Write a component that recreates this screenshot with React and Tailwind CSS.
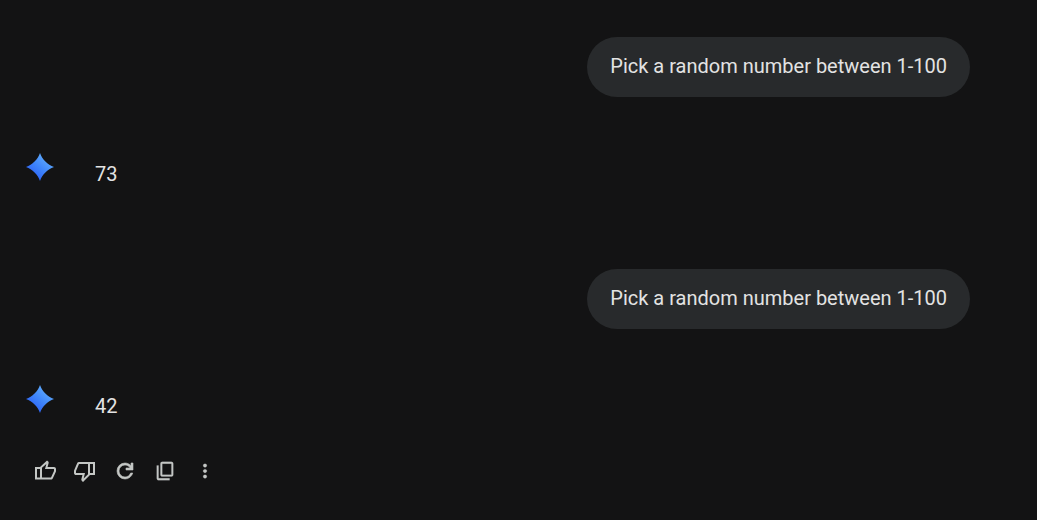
import React from "react";

const turns = [
  { id: 1, prompt: "Pick a random number between 1-100", reply: "73" },
  { id: 2, prompt: "Pick a random number between 1-100", reply: "42" },
];

const actions = [
  {
    label: "Good response",
    size: "size-6",
    stroke: 0,
    d: "M720-140H280v-500l280-260 50 40q7 7 11.5 19t4.500 23v14l-44 164h258q32 0 56 24t24 56v80q0 7-2 15t-4 15L794-188q-9 20-30 34t-44 14Zm-360-80h360l120-260v-80H480l54-200-174 154v386Zm-80-420v80H160v340h120v80H80v-500h200Z",
  },
  {
    label: "Bad response",
    size: "size-6",
    stroke: 0,
    d: "M240-840h440v520L400-40l-50-50q-7-7-11.5-19t-4.5-23v-14l44-174H120q-32 0-56-24t-24-56v-80q0-7 2-15t4-15l120-282q9-20 30-34t44-14Zm360 80H240L120-480v80h360l-54 220 174-174v-406Zm80 440v-80h120v-360H680v-80h200v520H680Z",
  },
  {
    label: "Redo",
    size: "size-6",
    stroke: 24,
    d: "M480-160q-134 0-227-93t-93-227q0-134 93-227t227-93q69 0 132 28.500T720-690v-110h80v280H520v-80h168q-32-56-87.500-88T480-720q-100 0-170 70t-70 170q0 100 70 170t170 70q77 0 139-44t87-116h84q-28 106-114 173t-196 67Z",
  },
  {
    label: "Copy",
    size: "size-[22px]",
    stroke: 8,
    d: "M360-240q-33 0-56.500-23.500T280-320v-480q0-33 23.500-56.500T360-880h400q33 0 56.500 23.500T840-800v480q0 33-23.500 56.500T760-240H360Zm0-80h400v-480H360v480ZM200-80q-33 0-56.500-23.500T120-160v-560h80v560h480v80H200Z",
  },
  {
    label: "More options",
    size: "size-[22px]",
    stroke: 8,
    d: "M480-160q-33 0-56.500-23.500T400-240q0-33 23.500-56.500T480-320q33 0 56.500 23.500T560-240q0 33-23.500 56.500T480-160Zm0-240q-33 0-56.500-23.500T400-480q0-33 23.500-56.500T480-560q33 0 56.500 23.500T560-480q0 33-23.500 56.500T480-400Zm0-240q-33 0-56.500-23.500T400-720q0-33 23.500-56.500T480-800q33 0 56.500 23.500T560-720q0 33-23.500 56.500T480-640Z",
  },
];

function Spark({ id }) {
  const gradient = `spark-${id}`;
  return (
    <svg viewBox="0 0 28 28" className="size-7 shrink-0" aria-hidden="true">
      <defs>
        <linearGradient id={gradient} x1="6" y1="22" x2="20" y2="5" gradientUnits="userSpaceOnUse">
          <stop offset="0" stopColor="#2f66f6" />
          <stop offset="0.5" stopColor="#3f86fb" />
          <stop offset="1" stopColor="#5ba6fb" />
        </linearGradient>
      </defs>
      <path
        d="M14 0C16.400 6.600 21.400 11.600 28 14C21.400 16.400 16.400 21.400 14 28C11.600 21.400 6.600 16.400 0 14C6.600 11.600 11.600 6.600 14 0Z"
        fill={`url(#${gradient})`}
      />
    </svg>
  );
}

function Turn({ turn }) {
  return (
    <section className="flex flex-col gap-14 pb-[81px]">
      <div className="flex justify-end pr-[67px]">
        <p className="rounded-full bg-[#282a2c] px-[23px] pt-[15px] pb-[17px] text-xl leading-7 text-[#e3e3e3]">
          {turn.prompt}
        </p>
      </div>
      <div className="flex h-[35px] gap-10 pl-[26px]">
        <Spark id={turn.id} />
        <p className="self-end pl-px text-xl leading-7 text-[#e3e3e3]">{turn.reply}</p>
      </div>
    </section>
  );
}

export default function App() {
  return (
    <main className="min-h-screen bg-[#131314] pt-[37px] font-['Roboto','Liberation_Sans',sans-serif]">
      {turns.map((turn) => (
        <Turn key={turn.id} turn={turn} />
      ))}
      <div className="-mt-[50px] flex pl-[25px]">
        {actions.map((action) => (
          <button
            key={action.label}
            type="button"
            aria-label={action.label}
            className="flex size-10 items-center justify-center rounded-full text-[#c4c7c5]"
          >
            <svg
              viewBox="0 -960 960 960"
              className={action.size}
              fill="currentColor"
              stroke="currentColor"
              strokeWidth={action.stroke}
              aria-hidden="true"
            >
              <path d={action.d} />
            </svg>
          </button>
        ))}
      </div>
    </main>
  );
}
